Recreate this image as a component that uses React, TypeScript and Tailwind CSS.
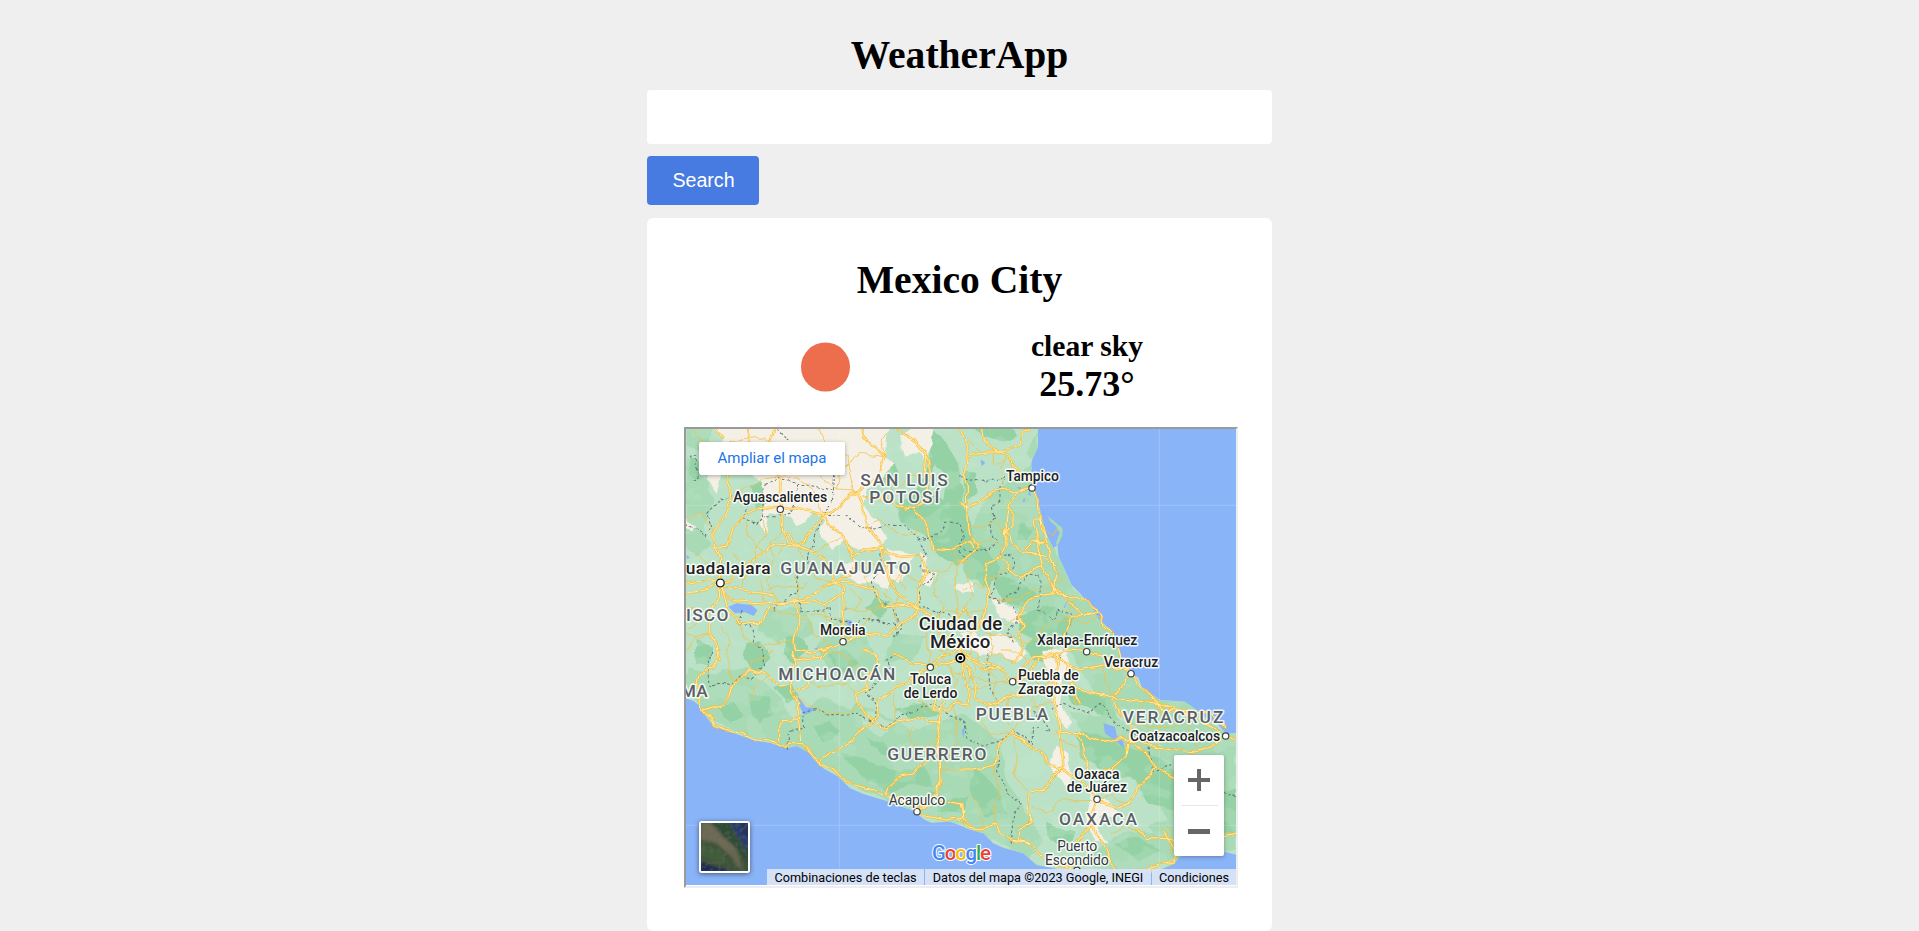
import React from "react";

type Label = { t: string; x: number; y: number; w: number; s: number; c?: string; weight?: number };

/* Map drawing units: three per CSS pixel. */
const labels: Label[] = [
  { t: "SAN LUIS", x: 541, y: 197, w: 262, s: 52, c: "#5a5f66" },
  { t: "POTOSÍ", x: 568, y: 249, w: 210, s: 52, c: "#5a5f66" },
  { t: "GUANAJUATO", x: 301, y: 462, w: 390, s: 52, c: "#5a5f66" },
  { t: "ISCO", x: 18, y: 602, w: 127, s: 52, c: "#5a5f66" },
  { t: "MICHOACÁN", x: 295, y: 781, w: 351, s: 52, c: "#5a5f66" },
  { t: "MA", x: 2, y: 831, w: 81, s: 52, c: "#5a5f66" },
  { t: "GUERRERO", x: 622, y: 1019, w: 297, s: 52, c: "#5a5f66" },
  { t: "PUEBLA", x: 887, y: 900, w: 218, s: 52, c: "#5a5f66" },
  { t: "VERACRUZ", x: 1328, y: 909, w: 302, s: 52, c: "#5a5f66" },
  { t: "OAXACA", x: 1137, y: 1214, w: 234, s: 52, c: "#5a5f66" },
  { t: "Aguascalientes", x: 160, y: 247, w: 282, s: 42 },
  { t: "uadalajara", x: 17, y: 462, w: 255, s: 52 },
  { t: "Morelia", x: 420, y: 645, w: 137, s: 42 },
  { t: "Ciudad de", x: 716, y: 629, w: 251, s: 56 },
  { t: "México", x: 750, y: 685, w: 181, s: 56 },
  { t: "Toluca", x: 690, y: 792, w: 124, s: 42 },
  { t: "de Lerdo", x: 671, y: 833, w: 161, s: 42 },
  { t: "Acapulco", x: 626, y: 1155, w: 170, s: 42, c: "#34383c", weight: 400 },
  { t: "Tampico", x: 978, y: 184, w: 159, s: 42 },
  { t: "Xalapa-Enríquez", x: 1071, y: 675, w: 301, s: 42 },
  { t: "Veracruz", x: 1271, y: 741, w: 164, s: 42 },
  { t: "Puebla de", x: 1014, y: 780, w: 182, s: 42 },
  { t: "Zaragoza", x: 1014, y: 821, w: 173, s: 42 },
  { t: "Coatzacoalcos", x: 1350, y: 963, w: 271, s: 42 },
  { t: "Oaxaca", x: 1183, y: 1077, w: 136, s: 42 },
  { t: "de Juárez", x: 1160, y: 1117, w: 181, s: 42 },
  { t: "Puerto", x: 1132, y: 1293, w: 120, s: 42, c: "#34383c", weight: 400 },
  { t: "Escondido", x: 1095, y: 1335, w: 191, s: 42, c: "#34383c", weight: 400 },
];

const towns = [
  [301, 268], [489, 665], [751, 742], [711, 1175], [1056, 204], [1220, 695],
  [1353, 761], [998, 785], [1637, 948], [1251, 1138], [1191, 1351],
];

const land =
  "M18 20H1074V80L1054 125V190L1075 245L1087 300L1100 345L1120 385L1132 375L1136 410L1150 440L1160 462L1175 495L1200 520L1235 560L1256 598L1290 628L1312 660L1323 720L1340 755L1375 772L1385 800L1410 820L1440 840L1515 845L1550 870L1575 892L1610 910L1640 942L1670 938V1305L1640 1297L1610 1295L1580 1285L1540 1292L1500 1310L1480 1333L1440 1350L1400 1362L1340 1378L1290 1390L1240 1375L1150 1350L1070 1335L1030 1300L970 1283L940 1270L910 1240L870 1229L838 1215L810 1205L755 1208L735 1200L700 1172L610 1140L550 1122L510 1105L475 1070L430 1045L405 1022L385 997L350 978L320 985L270 969L220 960L150 935L95 912L75 885L60 858L40 843L18 835Z";

const sands = [
  "M100 20H640L615 50L612 110L640 130L610 175L560 205L548 255L590 300L620 345L605 380L570 395L530 390L495 365L450 390L415 330L430 300L400 275L350 320L330 290L270 280L255 345L238 310L262 240L245 190L210 150L190 165L130 130L110 225L85 180L95 90L130 60Z",
  "M660 50L700 20H760L755 75L735 120L715 95L675 110Z",
  "M480 425H520L560 470L640 435L680 470L655 485L630 475L620 510L590 490L540 490L500 470L480 465Z",
  "M720 395L745 410L735 450L765 465L750 500L715 490L730 465Z",
  "M620 385L700 405L690 430L640 425Z",
  "M820 500L870 480L880 515L850 520Z",
  "M840 640L880 630L900 655L960 640L1000 660L1035 700L1010 730L955 700L900 705L850 680Z",
  "M1090 690L1160 685L1172 740L1150 770L1140 850L1170 900L1160 930L1135 905L1115 850L1120 770L1095 735Z",
  "M940 540L1000 560L1025 600L1005 610L960 590Z",
  "M1128 975L1165 1000L1168 1050L1200 1080L1245 1120L1290 1150L1310 1185L1262 1185L1255 1235L1290 1270L1240 1265L1220 1190L1230 1110L1180 1060L1160 1110L1135 1070L1105 1035Z",
  "M20 290L45 320L35 340L20 320Z",
];

const mids = [
  "M18 110L80 180L100 250L70 320L90 380L50 410L18 370Z",
  "M1075 27V80L1054 125V190L1075 245L1087 300L1110 360L1136 410L1175 495L1235 560L1312 660L1323 720L1385 805L1440 840L1515 845L1610 920L1668 940V1060L1480 1010L1370 920L1240 820L1200 740L1150 660L1070 590L980 550L920 440L870 330L900 260L960 200L1010 170Z",
  "M90 760L200 745L290 820L340 900L430 830L560 860L700 930L850 880L960 960L980 1080L1040 1180L1090 1260L1050 1320L870 1225L740 1190L520 1100L400 1005L330 980L200 945L95 900L70 860L20 820L18 745Z",
  "M1160 870L1320 900L1480 1010L1668 1020V1290L1500 1310L1340 1370L1210 1330L1300 1250L1460 1200L1400 1050L1240 980Z",
  "M480 590L560 650L600 730L530 790L440 740L410 680Z",
  "M640 640L740 650L700 720L610 730Z",
  "M20 20H100L70 90L20 80Z",
  "M260 565L380 570L400 640L290 670L235 630Z",
];

const darks = [
  "M750 27L790 50L830 120L850 200L850 330L870 380L830 440L770 400L740 350L665 310L640 250L700 230L725 180L750 130Z",
  "M560 27H590L590 90L552 95L570 55Z",
  "M600 175L640 125L655 150L625 205Z",
  "M210 190L265 185L280 250L225 265Z",
  "M850 145L885 160L890 220L855 245Z",
  "M880 27H1000L1010 45L970 65L920 55Z",
  "M840 250L870 280L880 370L920 390L960 440L930 500L860 470L835 380Z",
  "M940 460L1000 480L1070 520L1030 560L970 545L950 510Z",
  "M1020 585L1110 555L1180 600L1150 650L1070 660L1015 635Z",
  "M1060 650L1120 670L1110 730L1060 720L1030 690Z",
  "M320 655L370 650L385 690L340 730L310 700Z",
  "M200 665L240 660L275 710L230 760L190 720Z",
  "M50 660L100 680L90 740L45 730Z",
  "M200 815L270 835L280 880L240 910L215 880Z",
  "M115 860L165 850L190 890L150 910Z",
  "M400 920L450 905L480 940L430 970Z",
  "M440 700L500 690L540 730L480 760Z",
  "M555 565L590 535L630 550L600 600Z",
  "M480 1000L550 1015L650 1060L730 1040L760 1100L690 1090L640 1120L560 1080Z",
  "M560 950L610 970L660 1010L600 1000Z",
  "M750 1110L810 1140L860 1130L850 1180L780 1175Z",
  "M640 870L730 850L780 885L700 900Z",
  "M880 1040L950 1100L980 1180L920 1190L870 1120Z",
  "M1150 800L1200 810L1290 840L1320 900L1270 890L1220 860L1180 850Z",
  "M1190 935L1290 950L1340 980L1440 1010L1480 1060L1610 1130L1668 1100V1240L1520 1230L1490 1170L1400 1150L1370 1080L1280 1060L1200 1010Z",
  "M1100 1210L1150 1230L1190 1240L1170 1280L1110 1260Z",
  "M1300 1270L1370 1250L1440 1290L1380 1320Z",
  "M280 800L330 790L360 830L320 850Z",
  "M30 105L65 130L55 180L25 165Z",
  "M1010 360L1025 310L1060 330L1040 360Z",
];

const pales = [
  "M885 60L1010 70L1060 125L1000 170L920 150L880 100Z",
  "M760 130L800 170L790 240L750 210Z",
  "M515 330L560 310L555 345L525 350Z",
  "M440 800L530 770L560 820L510 870L460 850Z",
  "M950 720L1070 760L1110 860L1060 880L950 830Z",
  "M960 980L1060 950L1100 1030L1070 1110L1000 1080Z",
  "M1170 1110L1240 1150L1220 1200L1150 1160Z",
  "M1280 1140L1380 1170L1420 1240L1310 1230Z",
  "M820 530L930 500L985 600L920 640L850 600Z",
  "M560 870L640 910L600 950L550 920Z",
];

const lakes = [
  "M145 560L170 550L215 555L232 570L222 588L195 577L165 580Z",
  "M498 598L515 602L520 612L505 622Z", "M490 563L505 565L495 572Z",
  "M355 830L378 862L410 865L390 878L372 885L362 866L352 845Z",
  "M1270 910L1305 920L1310 945L1330 965L1332 985L1310 965L1275 940Z",
  "M902 118L916 128L905 139Z", "M1010 200L1024 202L1022 212Z", "M1048 213L1054 228L1044 224Z", "M1026 245L1033 233L1036 245Z",
  "M645 597L656 604L652 610Z", "M402 685L416 682L413 694Z", "M1150 565L1163 536L1155 563Z",
  "M18 405L30 412L22 418Z", "M845 930L856 920L850 955Z", "M1110 715L1135 705L1128 712Z",
];

const majors = [
  /* north-west */
  "M205 27L210 65L180 110L142 160L150 235L130 285L99 340L98 370L122 410L121 489",
  "M303 165L300 215L302 268L305 335L325 365L355 378",
  "M121 489L152 480L190 440L230 410L290 375L355 378L395 335L430 285L470 268L512 225L530 213L600 165L612 110L575 75L548 45L545 27",
  "M302 268L235 265L190 290L165 320L140 382L98 385",
  "M302 268L350 262L378 270L430 285",
  "M305 335L330 345L355 378L400 395L430 410L450 445L460 485",
  "M530 213L548 265L560 320L590 350L610 385L555 392L520 410L525 440L512 465L460 485L420 515L355 542L300 545L280 525L200 512L130 498",
  "M430 285L440 310L460 322L490 350L515 395L525 430",
  "M121 489L118 530L85 580L85 640L110 670L120 720",
  "M121 489L130 515L160 545L250 552L340 545L400 540L430 555L490 520",
  "M460 485L490 505L492 565L486 610L489 665",
  "M489 665L450 680L400 700L350 690L345 665L360 590L345 545",
  "M489 665L550 640L625 645L655 610L705 590L715 560L660 525L630 490L620 440L600 385",
  "M460 485L520 490L590 512L600 540L610 560L700 555L715 565L760 590L775 630L840 690",
  "M612 390L660 412L720 405L740 450L720 490L705 555",
  "M655 27L690 60L730 90L750 130L750 175L740 235L700 265L745 325L755 385L820 390L870 360L880 380",
  "M700 265L670 270L620 240L548 228", "M700 60L740 110L735 165",
  "M105 27L130 55", "M284 27L270 65", "M18 490L80 480L121 489", "M18 520L80 510L121 489L145 570L180 610L240 610L270 560",
  /* north-east */
  "M840 27L862 80L860 130L850 160L862 195L862 245L866 320L872 350L900 380L840 425",
  "M905 27L910 60L940 90L980 107L1020 155L1055 190",
  "M866 112L905 97L965 95L1020 75L1030 35L1045 27",
  "M840 248L870 262L970 205L1005 218L1040 205L1056 204L1075 250L1078 280L1085 330L1115 415L1128 460L1118 520",
  "M1008 220L985 260L974 335L975 380L960 410L920 430L912 470L925 500L925 545L915 570",
  "M985 265L1002 285L1002 315L975 335L1000 375L1025 395L1055 398L1095 410L1130 440",
  "M962 412L985 445L1020 470L1050 455L1060 438L1085 440L1120 500L1130 525L1185 528L1225 548L1255 580L1265 605L1300 640L1312 680L1330 735L1353 761",
  "M1060 300L1080 300L1092 320L1092 360L1080 370L1070 345L1058 320Z", "M1035 390L1060 365L1090 365",
  "M1080 370L1078 410L1085 438", "M1120 500L1160 540L1210 580L1250 580",
  "M1130 520L1060 530L1040 545L1015 590L1035 615L1015 640L1030 670L1000 730",
  "M1210 580L1170 600L1150 650L1110 680", "M1220 695L1260 705L1310 730L1353 761",
  "M915 570L900 610L850 660L840 705L900 725L960 745L998 785L1060 710L1120 710L1160 690L1220 695",
  "M775 620L820 600L860 570",
  /* south-west */
  "M120 690L100 740L60 765L50 800L60 850L70 870L95 900L100 915L160 935L190 940L230 960L285 965L320 982L330 970L370 975L395 1000L420 1030L475 1060L512 1095L580 1112L610 1125L680 1145L712 1170L740 1188L800 1200L830 1195L870 1225",
  "M70 870L125 855L150 830L160 790L210 750L250 760L300 795L330 790",
  "M340 690L345 720L330 790L335 820L355 845L355 890L362 965",
  "M355 895L330 905L300 905L298 960", "M345 720L420 712L440 690", "M345 740L385 780L380 800L340 820",
  "M420 1030L450 995L520 960L545 930L580 905L610 925L650 910L710 895L750 905L775 905L778 870L790 850",
  "M580 905L555 880L535 850L530 820L560 810L565 770L595 735L585 700L550 690",
  "M580 905L595 890L590 840L620 825L650 800L700 770L751 742L840 715",
  "M775 905L770 950L778 1020L780 1080L770 1120L720 1160",
  "M620 1125L630 1100L660 1070L700 1065L735 1020",
  "M770 820L760 870L800 870L820 850L870 855", "M720 1165L780 1140L845 1152L848 1190L835 1195",
  "M640 700L700 730L760 730L800 705L845 690L870 710",
  /* south-east */
  "M845 700L850 760L865 830L860 850", "M860 715L920 750L960 745", "M845 720L890 790L880 830L920 855L1000 830L1100 800L1120 790",
  "M998 785L1040 770L1080 710L1120 700L1160 735",
  "M1130 700L1130 800L1120 850L1140 910L1145 960L1150 1040L1140 1050L1100 1025L1080 990L1010 950L995 935L1000 930L960 970L950 1000L945 1035L880 1050L840 1050",
  "M1160 735L1200 750L1270 735L1310 745L1353 761L1370 780L1380 795L1440 850L1450 870L1590 880L1637 920",
  "M1170 800L1220 815L1300 835L1353 761", "M1160 735L1170 790L1200 850",
  "M1300 835L1320 880L1350 910L1350 960L1400 1000L1420 1040L1480 1075",
  "M1350 960L1380 960L1430 985L1540 995L1600 975L1637 948L1665 960",
  "M1300 835L1440 850L1540 890L1620 935",
  "M1130 940L1200 940L1260 965L1330 955L1350 965", "M1340 970L1335 1010L1290 1050L1240 1060L1220 1040L1215 990L1195 940",
  "M1145 1050L1200 1080L1240 1120L1251 1138L1270 1150L1310 1165L1350 1150L1370 1120L1380 1090L1410 1070L1420 1045",
  "M1140 1050L1120 1070L1090 1110L1050 1120L1045 1160L1050 1200L1020 1230L1015 1260L1060 1275L1090 1310",
  "M1251 1138L1235 1190L1250 1250L1270 1270L1290 1320L1310 1350",
  "M1240 1210L1210 1240L1190 1265", "M870 1225L900 1230L950 1210L960 1240L990 1260L1050 1268",
  "M1100 1320L1190 1351L1250 1370L1310 1365L1370 1355L1440 1335L1480 1325L1490 1300L1450 1230",
  "M1370 1230L1400 1255L1470 1260L1510 1270L1668 1240", "M840 1150L850 1190L870 1215",
];

const minors = [
  "M40 27L60 60L120 80L180 60L250 50L320 90L370 120L420 170L470 210L530 213", "M18 300L60 280L100 330",
  "M150 235L200 200L250 180L300 170L360 175L400 210L430 285", "M190 290L210 350L250 400", "M250 300L255 345L225 390L230 430L290 470",
  "M325 365L280 420L260 480L280 525", "M355 378L370 430L350 470L355 540", "M305 335L270 370L280 410", "M400 395L460 360L490 350",
  "M420 30L440 70L500 110L520 213", "M470 210L480 150L540 100L612 110", "M610 170L640 210L630 240", "M630 30L600 60L612 110",
  "M650 200L690 170L735 165", "M560 320L600 300L650 340L700 345L745 325", "M18 560L60 570L85 580", "M85 640L50 650L30 680L18 690",
  "M180 610L190 650L240 680L300 670L345 665", "M270 560L320 580L360 590L420 580L490 600", "M492 565L550 580L590 560L610 560",
  "M550 640L560 600L600 560", "M655 610L640 580L660 525", "M705 590L740 640L750 742", "M630 490L670 460L720 490", "M730 450L780 460L830 430L870 425",
  "M820 390L835 440L825 500L835 560L820 600", "M760 590L800 570L850 580L915 570", "M380 600L400 640L450 680",
  "M866 320L910 325L935 300L974 335", "M900 380L930 360L975 380", "M940 90L940 135L965 130L978 107", "M978 107L968 150L970 205",
  "M866 60L905 97", "M1085 330L1120 350L1130 330", "M1128 460L1150 480L1110 500L1060 510L1000 540L950 545", "M925 500L880 490L850 510",
  "M912 470L950 480L960 450L1000 440", "M1030 670L1080 650L1110 680L1130 740", "M1170 600L1120 605L1080 640", "M1015 590L980 610L940 600",
  "M1185 528L1160 590L1210 610L1260 590", "M860 570L880 600L920 640L990 650L1030 670",
  "M210 750L220 720L260 710L280 690", "M215 840L220 800L260 770L300 795", "M335 820L380 850L440 880L520 875L535 850",
  "M385 780L420 800L500 790L530 820", "M440 690L500 710L540 760L565 770", "M650 800L640 850L650 910", "M700 770L690 830L730 850L760 870",
  "M820 850L830 900L830 960L800 1020L778 1080", "M778 1045L840 1050", "M730 860L720 895", "M735 1020L760 1010L778 1020",
  "M920 855L900 900L930 940L995 935", "M920 750L950 780L940 830L960 880L1000 930", "M1000 930L1030 890L1060 860L1100 850L1120 850",
  "M945 1035L950 1080L960 1120L940 1170L950 1210", "M1000 960L1015 1000L1000 1060L1030 1100L1050 1120", "M1145 960L1190 980L1215 1030",
  "M1060 1160L1100 1180L1150 1140L1251 1138", "M1251 1138L1290 1130L1350 1150", "M1290 1240L1340 1220L1370 1230", "M1460 1220L1480 1250L1470 1300",
  "M1380 870L1400 840L1440 850L1440 920L1430 985", "M1530 890L1520 940L1560 990", "M1350 910L1400 920L1480 920L1540 890",
  "M870 1120L900 1170L910 1230", "M1270 735L1280 790L1300 835", "M1110 780L1170 800L1190 850", "M840 775L900 770L940 790L998 785", "M700 920L690 960L730 990L770 950",
  "M780 640L800 670L790 720L820 760L850 760", "M770 690L810 700L850 680L890 690L900 725", "M860 640L880 670L870 710L885 750L865 790",
  "M800 740L830 780L820 830L850 850", "M900 660L930 700L960 700L1000 730", "M930 640L940 680L920 720L940 750", "M850 800L900 810L930 790",
  "M1060 770L1080 800L1060 840L1080 870", "M990 820L980 860L1000 880", "M1090 720L1100 760L1130 770", "M960 690L1000 690L1040 720",
  "M560 440L550 470L570 500L590 512", "M525 440L570 430L620 440", "M400 440L410 480L460 485", "M160 400L200 430L190 500", "M240 480L250 552",
  "M380 490L350 505L300 500L260 510", "M430 555L440 600L470 620", "M510 505L540 540L530 570", "M630 490L610 520L640 550L700 555",
  "M130 620L150 670L140 720L160 790", "M60 600L40 620L18 620", "M18 640L60 660L85 640", "M18 440L50 460L90 450L121 489", "M50 400L80 430L121 440",
  "M680 440L660 480L680 510", "M770 470L760 520L790 550L780 590", "M870 440L860 480L880 530L850 570",
];

const borders = [
  "M290 27L330 70L350 130", "M30 110L50 105L48 140L60 165L30 185", "M18 310L50 330L80 350L95 320L80 280L120 240L160 220L200 260L190 300L230 310L250 290L255 200L300 175L350 190L345 250L330 280L290 290L255 290",
  "M350 190L410 200L460 215L450 260L420 300L410 340L385 400L380 440L350 480L350 520L290 550L280 570", "M430 285L490 290L540 320L590 330L620 310L680 320L720 360L780 340L800 310L840 310L850 350L830 390L870 420",
  "M440 90L465 150L460 215",
  "M600 385L600 440L580 490L590 530L640 570L660 620L640 650", "M720 370L740 400L720 440L760 470L720 500L715 560L800 580L850 620", "M360 545L365 575L430 570L450 560L455 600L500 605L520 610L560 595L640 610L650 650",
  "M180 570L175 610L220 620L220 660L250 700L250 740L215 770L180 765L150 800L120 790L90 800L85 720L100 690", "M840 170L920 180L975 170L960 200L960 240L940 260L945 290L925 310L940 350L955 360L930 390L880 395L840 380",
  "M960 400L1000 405L1005 440L975 460L950 460L945 500L930 530L960 550L1000 520L1020 490L1050 460L1080 465L1080 520L1075 570L1120 600L1130 570L1180 585L1160 630L1160 680L1130 720",
  "M1000 560L1015 600L985 630L1000 670", "M325 990L325 935L370 925L372 875L410 865L440 885L530 880L560 900L585 910L590 860L555 820L600 780L640 760L620 720L655 700", "M585 910L620 920L690 875L760 850L800 880L850 900L860 950L900 980L950 970L1000 930L1060 970L1060 920L1110 935L1090 890L1060 870",
  "M955 990L955 1050L980 1120L1020 1150L1000 1200L990 1270", "M920 700L930 800L950 850", "M1110 870L1150 850L1230 880L1260 850L1330 930L1400 960L1410 1010L1420 1060L1480 1030", "M1630 1120L1668 1123",
];

function Paths({ list, ...rest }: { list: string[] } & React.SVGProps<SVGGElement>) {
  return (
    <g {...rest}>
      {list.map((d, i) => (
        <path key={i} d={d} />
      ))}
    </g>
  );
}

function MapDrawing() {
  return (
    <svg viewBox="18 27 1650 1371" className="block h-[457px] w-[550px] font-[Roboto,sans-serif]">
      <defs>
        <clipPath id="land">
          <path d={land} />
        </clipPath>
        <filter id="ridge" x="0" y="0" width="100%" height="100%">
          <feTurbulence type="fractalNoise" baseFrequency="0.011 0.014" numOctaves="3" seed="8" />
          <feColorMatrix values="0 0 0 0 .55  0 0 0 0 .81  0 0 0 0 .63  18 0 0 0 -10" />
        </filter>
        {/* Slight jitter that makes the traced lines wander like real roads. */}
        <filter id="wander" filterUnits="userSpaceOnUse" x="0" y="0" width="1700" height="1420">
          <feTurbulence type="fractalNoise" baseFrequency="0.025" numOctaves="2" seed="5" result="n" />
          <feDisplacementMap in="SourceGraphic" in2="n" scale="22" xChannelSelector="R" yChannelSelector="G" />
        </filter>
      </defs>
      <rect x="0" y="0" width="1700" height="1420" fill="#8ab4f8" />
      <path d={land} fill="#bbe2c6" />
      <path d="M1102 287L1148 325L1147 347L1132 378L1128 368L1139 338L1128 318L1112 305Z" fill="#a8dab5" />
      <g clipPath="url(#land)">
        <g filter="url(#wander)">
          <Paths list={mids} fill="#a8dab5" />
          <Paths list={darks} fill="#94d2a5" />
          <Paths list={pales} fill="#bbe2c6" />
        </g>
        <rect x="18" y="27" width="1650" height="1371" filter="url(#ridge)" opacity=".25" />
        <Paths list={sands} fill="#f5f0e5" filter="url(#wander)" />
      </g>
      <Paths list={lakes} fill="#8ab4f8" />
      <path d="M478 27V1398M1438 27V1398M18 256H1668M18 1216H1668" stroke="#fff" strokeOpacity=".18" strokeWidth="3" />
      <g filter="url(#wander)">
        <Paths list={borders} fill="none" stroke="#64787a" strokeWidth="3.2" strokeDasharray="8 7" />
      </g>
      <g strokeLinejoin="round" strokeLinecap="round" filter="url(#wander)">
        <Paths list={minors} fill="none" stroke="#f5c044" strokeWidth="2.6" strokeOpacity=".9" />
        <Paths list={majors} fill="none" stroke="#fbba2a" strokeWidth="7.4" strokeOpacity=".85" />
        <Paths list={majors} fill="none" stroke="#fff0b8" strokeWidth="2.8" />
      </g>
      <g fill="#fff" stroke="#3c4043" strokeWidth="3.5">
        {towns.map(([x, y]) => (
          <circle key={x} cx={x} cy={y} r="9.5" />
        ))}
        <circle cx="121" cy="489" r="11.5" stroke="#202124" strokeWidth="4" />
        <circle cx="841" cy="714" r="12.5" stroke="#000" strokeWidth="5" />
        <circle cx="841" cy="714" r="6" fill="#000" stroke="none" />
      </g>
      {labels.map((l) => (
        <text
          key={l.t}
          x={l.x}
          y={l.y}
          fontSize={l.s}
          fontWeight={l.weight ?? 500}
          textLength={l.w}
          fill={l.c ?? "#202124"}
          stroke="#fff"
          strokeOpacity=".85"
          strokeWidth="9"
          strokeLinejoin="round"
          paintOrder="stroke"
        >
          {l.t}
        </text>
      ))}
      <text x="756" y="1319" fontSize="61" textLength="177" fontWeight="500" stroke="#fff" strokeWidth="6" strokeLinejoin="round" paintOrder="stroke" fontFamily="Roboto, sans-serif">
        <tspan fill="#4285f4">G</tspan>
        <tspan fill="#ea4335">o</tspan>
        <tspan fill="#fbbc04">o</tspan>
        <tspan fill="#4285f4">g</tspan>
        <tspan fill="#34a853">l</tspan>
        <tspan fill="#ea4335">e</tspan>
      </text>
    </svg>
  );
}

function SatelliteThumb() {
  return (
    <svg viewBox="0 0 141 144" preserveAspectRatio="none" className="block h-full w-full">
      <defs>
        <filter id="soft">
          <feGaussianBlur stdDeviation="5" />
        </filter>
        <filter id="grain" x="0" y="0" width="100%" height="100%">
          <feTurbulence type="fractalNoise" baseFrequency=".08" numOctaves="3" seed="3" />
          <feColorMatrix values="0 0 0 0 .1  0 0 0 0 .14  0 0 0 0 .1  5 0 0 0 -2.4" />
        </filter>
      </defs>
      <rect width="141" height="144" fill="#405239" />
      <g filter="url(#soft)">
        <path d="M0 0H45L65 40L100 65L115 110L90 100L45 60L0 50Z" fill="#6f6a55" />
        <path d="M30 0H85L105 45L145 95V130L105 75L65 40Z" fill="#2e4b35" />
        <path d="M85 -5H150V100L125 62L108 40Z" fill="#263a70" />
        <path d="M105 -5H118L125 30L150 60V-5Z" fill="#28315c" />
        <path d="M-5 115L35 130L80 140L100 150H-5Z" fill="#1d2a55" />
        <path d="M0 60L50 80L85 120L40 115L0 100Z" fill="#405b39" />
        <path d="M80 75L110 85L125 140L105 125Z" fill="#686650" />
      </g>
      <rect width="141" height="144" filter="url(#grain)" opacity=".4" />
    </svg>
  );
}

function MapFrame() {
  return (
    <div className="relative ml-[37px] h-[461px] w-[554px] overflow-hidden border-2 border-t-[#9a9a9a] border-r-[#eeeeee] border-b-[#eeeeee] border-l-[#9a9a9a] font-[Roboto,sans-serif]">
      <MapDrawing />
      <a className="absolute top-[13px] left-[13px] flex h-[33px] w-[146px] items-center justify-center rounded-[2px] bg-white text-[15px] text-[#1a73e8] shadow-[0_1px_4px_rgba(0,0,0,0.3)]">
        Ampliar el mapa
      </a>
      <button className="absolute top-[392px] left-[13px] h-[52px] w-[51px] rounded-[3px] border-2 border-white shadow-[0_1px_5px_rgba(0,0,0,0.5)]">
        <SatelliteThumb />
      </button>
      <div className="absolute top-[326px] left-[488px] flex h-[101px] w-[50px] flex-col items-center rounded-[2px] bg-white shadow-[0_1px_4px_rgba(0,0,0,0.3)]">
        <button className="flex h-[50px] w-full items-center justify-center">
          <svg viewBox="0 0 22 22" className="h-[22px] w-[22px]">
            <path d="M9 0h4v9h9v4h-9v9h-4v-9h-9v-4h9z" fill="#666" />
          </svg>
        </button>
        <span className="h-px w-[37px] bg-[#e6e6e6]" />
        <button className="flex h-[50px] w-full items-center justify-center">
          <svg viewBox="0 0 22 5" className="h-[5px] w-[22px]">
            <path d="M0 0h22v5h-22z" fill="#666" />
          </svg>
        </button>
      </div>
      <div className="absolute right-0 bottom-[1px] flex h-4 gap-px text-[12.7px] leading-[17px] whitespace-nowrap text-black">
        <span className="flex w-[157px] justify-center bg-[#d9e4f7]/95">Combinaciones de teclas</span>
        <span className="flex w-[226px] justify-center bg-[#d9e4f7]/95">Datos del mapa ©2023 Google, INEGI</span>
        <span className="flex w-[84px] justify-center bg-[#d9e4f7]/95">Condiciones</span>
      </div>
      <div className="absolute bottom-0 left-0 h-px w-full bg-white" />
    </div>
  );
}

export default function App() {
  return (
    <div className="h-[931px] overflow-hidden bg-[#efefef] font-['Liberation_Serif',serif] text-black">
      <main className="ml-[647px] w-[625px]">
        <h1 className="pt-8 text-center text-[39.6px] leading-[46px] font-bold">WeatherApp</h1>
        <form className="pt-3">
          <input className="block h-[54px] w-full rounded-[4px] bg-white px-4 text-xl outline-none" />
          <button
            type="button"
            className="mt-3 block h-[49px] w-[112px] rounded-[4px] bg-[#487be1] pl-px font-['Liberation_Sans',sans-serif] text-[19.6px] text-white"
          >
            Search
          </button>
        </form>
        <section className="mt-[13px] h-[713px] rounded-[6px] bg-white pt-[39px]">
          <h1 className="text-center text-[39.6px] leading-[46px] font-bold">Mexico City</h1>
          <div className="mt-[25px] ml-[47px] grid h-[75px] w-[524px] grid-cols-2 items-center text-center font-bold">
            <svg viewBox="0 0 50 50" className="mx-auto h-[50px] w-[50px]">
              <circle cx="25.5" cy="25" r="24.5" fill="#ec6e4c" />
            </svg>
            <div className="pt-px">
              <p className="text-[29.6px] leading-[34px]">clear sky</p>
              <p className="text-[36px] leading-[42px]">25.73°</p>
            </div>
          </div>
          <div className="pt-[24px]">
            <MapFrame />
          </div>
        </section>
      </main>
    </div>
  );
}
